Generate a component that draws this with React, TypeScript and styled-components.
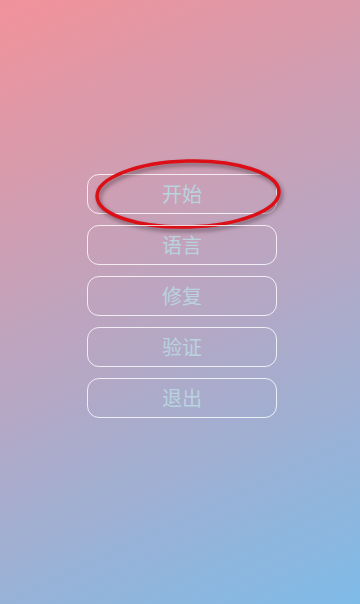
import styled, { createGlobalStyle } from 'styled-components';

const GlobalStyle = createGlobalStyle`
  html, body {
    margin: 0;
    padding: 0;
    height: 100%;
  }
  #root {
    height: 100%;
  }
`;

const items = ['开始', '语言', '修复', '验证', '退出'];

const App = () => {
  return (
    <Screen>
      <GlobalStyle />
      <Menu>
        {items.map((label, i) => (
          <MenuButton key={label}>
            {label}
            {i === 0 && (
              <Highlight viewBox="0 0 190 72" aria-hidden="true">
                <ellipse cx="95" cy="36" rx="91" ry="33" transform="rotate(-1.5 95 36)" />
              </Highlight>
            )}
          </MenuButton>
        ))}
      </Menu>
    </Screen>
  );
};

const Screen = styled.div`
  width: 100vw;
  height: 100vh;
  background: linear-gradient(155deg, #f2929a 0%, #b9a6c2 50%, #7ebbe7 100%);
  display: flex;
  justify-content: center;
  font-family: 'Noto Sans CJK SC', 'Noto Sans', sans-serif;
  overflow: hidden;
`;

const Menu = styled.div`
  display: flex;
  flex-direction: column;
  gap: 11px;
  margin-top: 174px;
  margin-left: 4px;
`;

const MenuButton = styled.button`
  position: relative;
  width: 190px;
  height: 40px;
  border: 1.5px solid rgba(255, 255, 255, 0.8);
  border-radius: 12px;
  background: transparent;
  color: #b9d3df;
  font-family: 'Noto Sans CJK SC', 'Noto Sans', sans-serif;
  font-size: 20px;
  line-height: 1;
  padding: 0;
  cursor: pointer;
`;

const Highlight = styled.svg`
  position: absolute;
  left: 5px;
  top: -17px;
  width: 190px;
  height: 72px;
  overflow: visible;
  filter: drop-shadow(2px 3px 2px rgba(60, 40, 50, 0.55));
  pointer-events: none;

  ellipse {
    fill: none;
    stroke: #dc0f17;
    stroke-width: 3.5px;
  }
`;

export default App;
